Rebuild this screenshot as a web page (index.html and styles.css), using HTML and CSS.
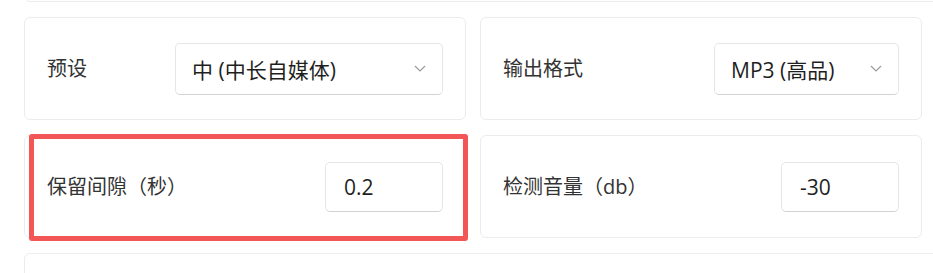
FILE: index.html
```html
<!DOCTYPE html>
<html>

<head>
  <link rel="stylesheet" href="styles.css">
</head>

<body>
  <div class="panel">
    <div class="card wide"></div>

    <div class="card">
      <span class="label">预设</span>
      <div class="select preset">
        <span>中 (中长自媒体)</span>
        <svg class="chevron" viewBox="0 0 12 7"><path d="M1 1l5 5 5-5" /></svg>
      </div>
    </div>

    <div class="card">
      <span class="label">输出格式</span>
      <div class="select format">
        <span>MP3 (高品)</span>
        <svg class="chevron" viewBox="0 0 12 7"><path d="M1 1l5 5 5-5" /></svg>
      </div>
    </div>

    <div class="card marked">
      <span class="label">保留间隙（秒）</span>
      <div class="field">0.2</div>
      <div class="highlight"></div>
    </div>

    <div class="card">
      <span class="label">检测音量（db）</span>
      <div class="field">-30</div>
    </div>

    <div class="card wide"></div>
  </div>
</body>

</html>
```

FILE: styles.css
```css
* {
  margin: 0;
  padding: 0;
  box-sizing: border-box;
}

html,
body {
  width: 100vw;
  height: 100vh;
  overflow: hidden;
}

body {
  background: #fff;
  font-family: "Open Sans", "Noto Sans CJK SC", sans-serif;
  font-size: 20px;
  color: #333;
}

.panel {
  display: grid;
  grid-template-columns: 442px 442px;
  grid-auto-rows: 103px;
  column-gap: 14px;
  row-gap: 15px;
  padding-left: 24px;
  margin-top: -101px;
}

.card {
  display: flex;
  justify-content: space-between;
  align-items: center;
  padding: 0 22px;
  background: #fff;
  border: 1px solid #ececec;
  border-radius: 6px;
}

.card.wide {
  grid-column: 1 / -1;
  width: 960px;
}

.card.marked {
  position: relative;
}

.label {
  color: #333;
  line-height: 1;
}

.select,
.field {
  display: flex;
  align-items: center;
  background: #fff;
  border: 1px solid #e6e6e6;
  border-bottom-color: #d2d2d2;
  border-radius: 5px;
  color: #1f1f1f;
  font-size: 21px;
}

.select {
  justify-content: space-between;
  height: 52px;
  padding: 0 16px 0 16px;
}

.select.preset {
  width: 268px;
}

.select.format {
  width: 185px;
}

.chevron {
  width: 12px;
  height: 7px;
  fill: none;
  stroke: #9a9a9a;
  stroke-width: 1.2;
}

.field {
  width: 118px;
  height: 50px;
  padding-left: 18px;
}

.highlight {
  position: absolute;
  top: -2px;
  left: 4px;
  right: -3px;
  bottom: -4px;
  border: 5px solid #f25656;
  border-radius: 3px;
  pointer-events: none;
}
```
